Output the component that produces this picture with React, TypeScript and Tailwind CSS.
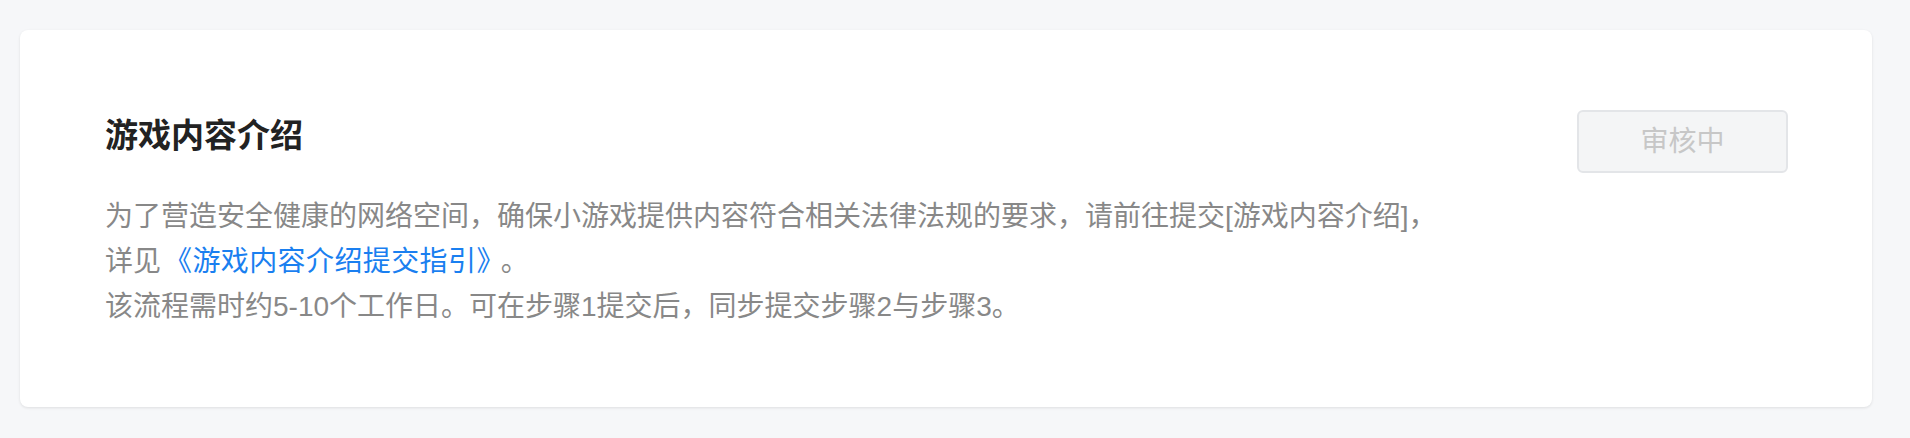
export default function App() {
  return (
    <div
      className="min-h-[438px] bg-[#f6f7f9] pl-[20px] pr-[38px] pt-[30px] pb-[30px]"
      style={{ fontFamily: '"Liberation Sans", "Noto Sans CJK SC", sans-serif' }}
    >
      <div className="flex items-start justify-between rounded-[8px] bg-white pl-[85px] pr-[84px] pt-[80px] pb-[78px] shadow-[0_1px_3px_rgba(0,0,0,0.1)]">
        <div>
          <h1 className="text-[33px] leading-[52px] font-bold text-[#222222]">
            游戏内容介绍
          </h1>
          <p className="mt-[32px] text-[28px] leading-[45px] text-[#888888] whitespace-nowrap">
            为了营造安全健康的网络空间，确保小游戏提供内容符合相关法律法规的要求，请前往提交[游戏内容介绍]，
            <br />
            详见
            <a href="#" className="ml-[3px] mr-[10px] tracking-[0.4px] text-[#1a7ff0]">
              《游戏内容介绍提交指引》
            </a>
            。
            <br />
            该流程需时约5-10个工作日。可在步骤1提交后，同步提交步骤2与步骤3。
          </p>
        </div>
        <button
          disabled
          className="w-[211px] h-[63px] rounded-[6px] border-2 border-[#e3e5e8] bg-[#f4f5f6] text-[28px] text-[#c7c7c7]"
        >
          审核中
        </button>
      </div>
    </div>
  );
}
